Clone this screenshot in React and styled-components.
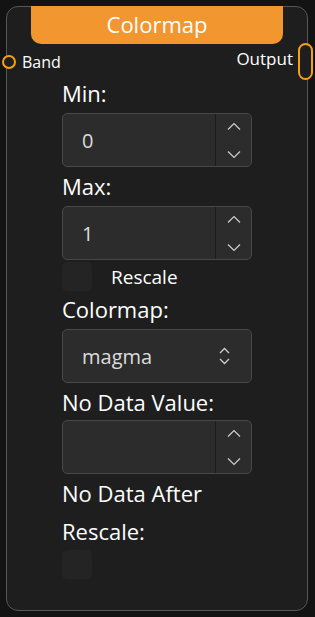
import styled, { createGlobalStyle } from 'styled-components';

const Global = createGlobalStyle`
    html, body {
        margin: 0;
        padding: 0;
        background: #131313;
        font-family: "Open Sans", "Noto Sans", sans-serif;
        color: #ffffff;
    }
    * { box-sizing: border-box; }
`

const Canvas = styled.div`
    width: 315px;
    height: 617px;
    padding: 6px 0 0 6px;
`

const Node = styled.div`
    position: relative;
    width: 302px;
    height: 605px;
    background: #1e1e1e;
    border: 1px solid #575757;
    border-radius: 12px;
    display: flex;
    flex-direction: column;
    align-items: center;
`

const Header = styled.div`
    width: 252px;
    height: 38px;
    margin-top: -1px;
    background: #f2962f;
    border-radius: 0 0 10px 10px;
    display: flex;
    align-items: center;
    justify-content: center;
    font-size: 22px;
    line-height: 1;
    padding-bottom: 2px;
`

const Ports = styled.div`
    width: 100%;
    height: 35px;
    display: flex;
    justify-content: space-between;
    align-items: flex-start;
`

const PortLabel = styled.span`
    font-size: ${p => (p.$right ? 17 : 16)}px;
    line-height: 20px;
    margin-top: ${p => p.$top}px;
    padding: ${p => (p.$right ? '0 14px 0 0' : '0 0 0 15px')};
`

const RoundHandle = styled.span`
    position: absolute;
    left: -5px;
    top: 48px;
    width: 14px;
    height: 14px;
    border-radius: 50%;
    border: 2.5px solid #f5a20c;
    background: #1e1e1e;
`

const PillHandle = styled.span`
    position: absolute;
    right: -6px;
    top: 36px;
    width: 15px;
    height: 37px;
    border-radius: 8px;
    border: 2.5px solid #f5a20c;
    background: #1e1e1e;
`

const Body = styled.div`
    width: 190px;
    display: flex;
    flex-direction: column;
`

const Label = styled.div`
    font-size: 22px;
    line-height: 28px;
    margin-top: ${p => p.$top ?? 5}px;
`

const Field = styled.div`
    height: 54px;
    margin-top: ${p => p.$top ?? 6}px;
    display: flex;
    background: #2c2c2c;
    border: 1.5px solid #474747;
    border-radius: 5px;
    overflow: hidden;
`

const Value = styled.div`
    flex: 1;
    display: flex;
    align-items: center;
    padding-left: 19px;
    font-size: 20px;
    color: #dcdcdc;
`

const Spinner = styled.div`
    width: 36px;
    border-left: 1.5px solid #1c1c1c;
    display: flex;
    flex-direction: column;
    justify-content: space-between;
    align-items: center;
    padding: 8px 0 7px;
`

const SelectIcon = styled.div`
    width: 54px;
    display: flex;
    align-items: center;
    justify-content: center;
`

const CheckRow = styled.div`
    display: flex;
    align-items: center;
    gap: 19px;
    margin-top: ${p => p.$top ?? 0}px;
    font-size: 19px;
`

const Box = styled.div`
    width: 30px;
    height: 29px;
    border-radius: 5px;
    background: #242424;
`

const Chevron = ({ up }) => (
    <svg width="14" height="9" viewBox="0 0 14 9">
        <path d={up ? 'M1 7.5 L7 1.5 L13 7.5' : 'M1 1.5 L7 7.5 L13 1.5'} fill="none" stroke="#cfcfcf" strokeWidth="1.2" />
    </svg>
)

const UpDown = () => (
    <svg width="11" height="18" viewBox="0 0 11 18">
        <path d="M1 6 L5.5 1.5 L10 6 M1 12 L5.5 16.5 L10 12" fill="none" stroke="#cfcfcf" strokeWidth="1.3" />
    </svg>
)

const NumberField = ({ value, top }) => (
    <Field $top={top}>
        <Value>{value}</Value>
        <Spinner>
            <Chevron up />
            <Chevron />
        </Spinner>
    </Field>
)

const App = () => {
    return (
        <>
            <Global />
            <Canvas>
                <Node>
                    <Header>Colormap</Header>
                    <RoundHandle />
                    <PillHandle />
                    <Ports>
                        <PortLabel $top={8}>Band</PortLabel>
                        <PortLabel $top={5} $right>Output</PortLabel>
                    </Ports>
                    <Body>
                        <Label $top={0}>Min:</Label>
                        <NumberField value="0" />
                        <Label>Max:</Label>
                        <NumberField value="1" />
                        <CheckRow $top={2}>
                            <Box />
                            <span>Rescale</span>
                        </CheckRow>
                        <Label $top={4}>Colormap:</Label>
                        <Field>
                            <Value>magma</Value>
                            <SelectIcon>
                                <UpDown />
                            </SelectIcon>
                        </Field>
                        <Label>No Data Value:</Label>
                        <NumberField value="" top={4} />
                        <Label>No Data After</Label>
                        <Label $top={10}>Rescale:</Label>
                        <CheckRow $top={5}>
                            <Box />
                        </CheckRow>
                    </Body>
                </Node>
            </Canvas>
        </>
    )
}

export default App
